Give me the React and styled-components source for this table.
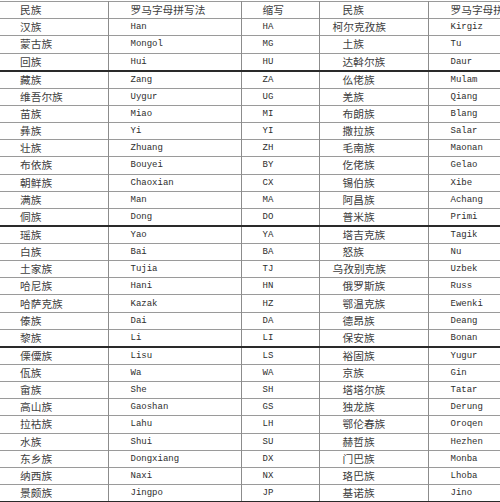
import React from "react";
import styled, { createGlobalStyle } from "styled-components";

const Global = createGlobalStyle`
  html, body { margin: 0; padding: 0; background: #fff; overflow: hidden; }
  body { width: 500px; height: 502px; }
`;

const Page = styled.div`
  width: 500px;
  height: 502px;
  overflow: hidden;
  padding-top: 1px;
  box-sizing: border-box;
`;

const Table = styled.table`
  border-collapse: collapse;
  table-layout: fixed;
  width: 540px;
  color: #383838;
`;

const Row = styled.tr`
  height: 17.2px;
  border-top: 1px solid #9a9a9a;
  border-bottom: ${(p) => (p.$thick ? "2px solid #2a2a2a" : "1px solid #9a9a9a")};
`;

const Cell = styled.td`
  padding: 0 0 0 ${(p) => p.$pad}px;
  border-left: ${(p) => (p.$first ? "none" : "1px solid #8c8c8c")};
  white-space: nowrap;
  overflow: hidden;
  line-height: 16px;
  vertical-align: middle;
  font-family: ${(p) =>
    p.$latin
      ? '"Liberation Mono", "DejaVu Sans Mono", monospace'
      : '"Noto Sans CJK SC", "Noto Sans", sans-serif'};
  font-size: ${(p) => (p.$latin ? "9px" : "10.7px")};
  color: ${(p) => (p.$latin ? "#2e2e2e" : "#404040")};
`;

const data = [
  ["汉族", "Han", "HA", "柯尔克孜族", "Kirgiz"],
  ["蒙古族", "Mongol", "MG", "土族", "Tu"],
  ["回族", "Hui", "HU", "达斡尔族", "Daur"],
  ["藏族", "Zang", "ZA", "仫佬族", "Mulam"],
  ["维吾尔族", "Uygur", "UG", "羌族", "Qiang"],
  ["苗族", "Miao", "MI", "布朗族", "Blang"],
  ["彝族", "Yi", "YI", "撒拉族", "Salar"],
  ["壮族", "Zhuang", "ZH", "毛南族", "Maonan"],
  ["布依族", "Bouyei", "BY", "仡佬族", "Gelao"],
  ["朝鲜族", "Chaoxian", "CX", "锡伯族", "Xibe"],
  ["满族", "Man", "MA", "阿昌族", "Achang"],
  ["侗族", "Dong", "DO", "普米族", "Primi"],
  ["瑶族", "Yao", "YA", "塔吉克族", "Tagik"],
  ["白族", "Bai", "BA", "怒族", "Nu"],
  ["土家族", "Tujia", "TJ", "乌孜别克族", "Uzbek"],
  ["哈尼族", "Hani", "HN", "俄罗斯族", "Russ"],
  ["哈萨克族", "Kazak", "HZ", "鄂温克族", "Ewenki"],
  ["傣族", "Dai", "DA", "德昂族", "Deang"],
  ["黎族", "Li", "LI", "保安族", "Bonan"],
  ["傈僳族", "Lisu", "LS", "裕固族", "Yugur"],
  ["佤族", "Wa", "WA", "京族", "Gin"],
  ["畲族", "She", "SH", "塔塔尔族", "Tatar"],
  ["高山族", "Gaoshan", "GS", "独龙族", "Derung"],
  ["拉祜族", "Lahu", "LH", "鄂伦春族", "Oroqen"],
  ["水族", "Shui", "SU", "赫哲族", "Hezhen"],
  ["东乡族", "Dongxiang", "DX", "门巴族", "Monba"],
  ["纳西族", "Naxi", "NX", "珞巴族", "Lhoba"],
  ["景颇族", "Jingpo", "JP", "基诺族", "Jino"],
];

const thickAfter = new Set([3, 12, 19, 28]);

export default function App() {
  return (
    <Page>
      <Global />
      <Table>
        <colgroup>
          <col style={{ width: 108 }} />
          <col style={{ width: 133 }} />
          <col style={{ width: 78 }} />
          <col style={{ width: 109 }} />
          <col style={{ width: 112 }} />
        </colgroup>
        <tbody>
          <Row>
            <Cell $first $pad={20}>民族</Cell>
            <Cell $pad={22}>罗马字母拼写法</Cell>
            <Cell $pad={21}>缩写</Cell>
            <Cell $pad={23}>民族</Cell>
            <Cell $pad={22}>罗马字母拼写法</Cell>
          </Row>
          {data.map((r, i) => (
            <Row key={r[2]} $thick={thickAfter.has(i + 1)}>
              <Cell $first $pad={20}>{r[0]}</Cell>
              <Cell $latin $pad={22}>{r[1]}</Cell>
              <Cell $latin $pad={21}>{r[2]}</Cell>
              <Cell $pad={r[3].length >= 5 ? 13 : 23}>{r[3]}</Cell>
              <Cell $latin $pad={22}>{r[4]}</Cell>
            </Row>
          ))}
        </tbody>
      </Table>
    </Page>
  );
}
